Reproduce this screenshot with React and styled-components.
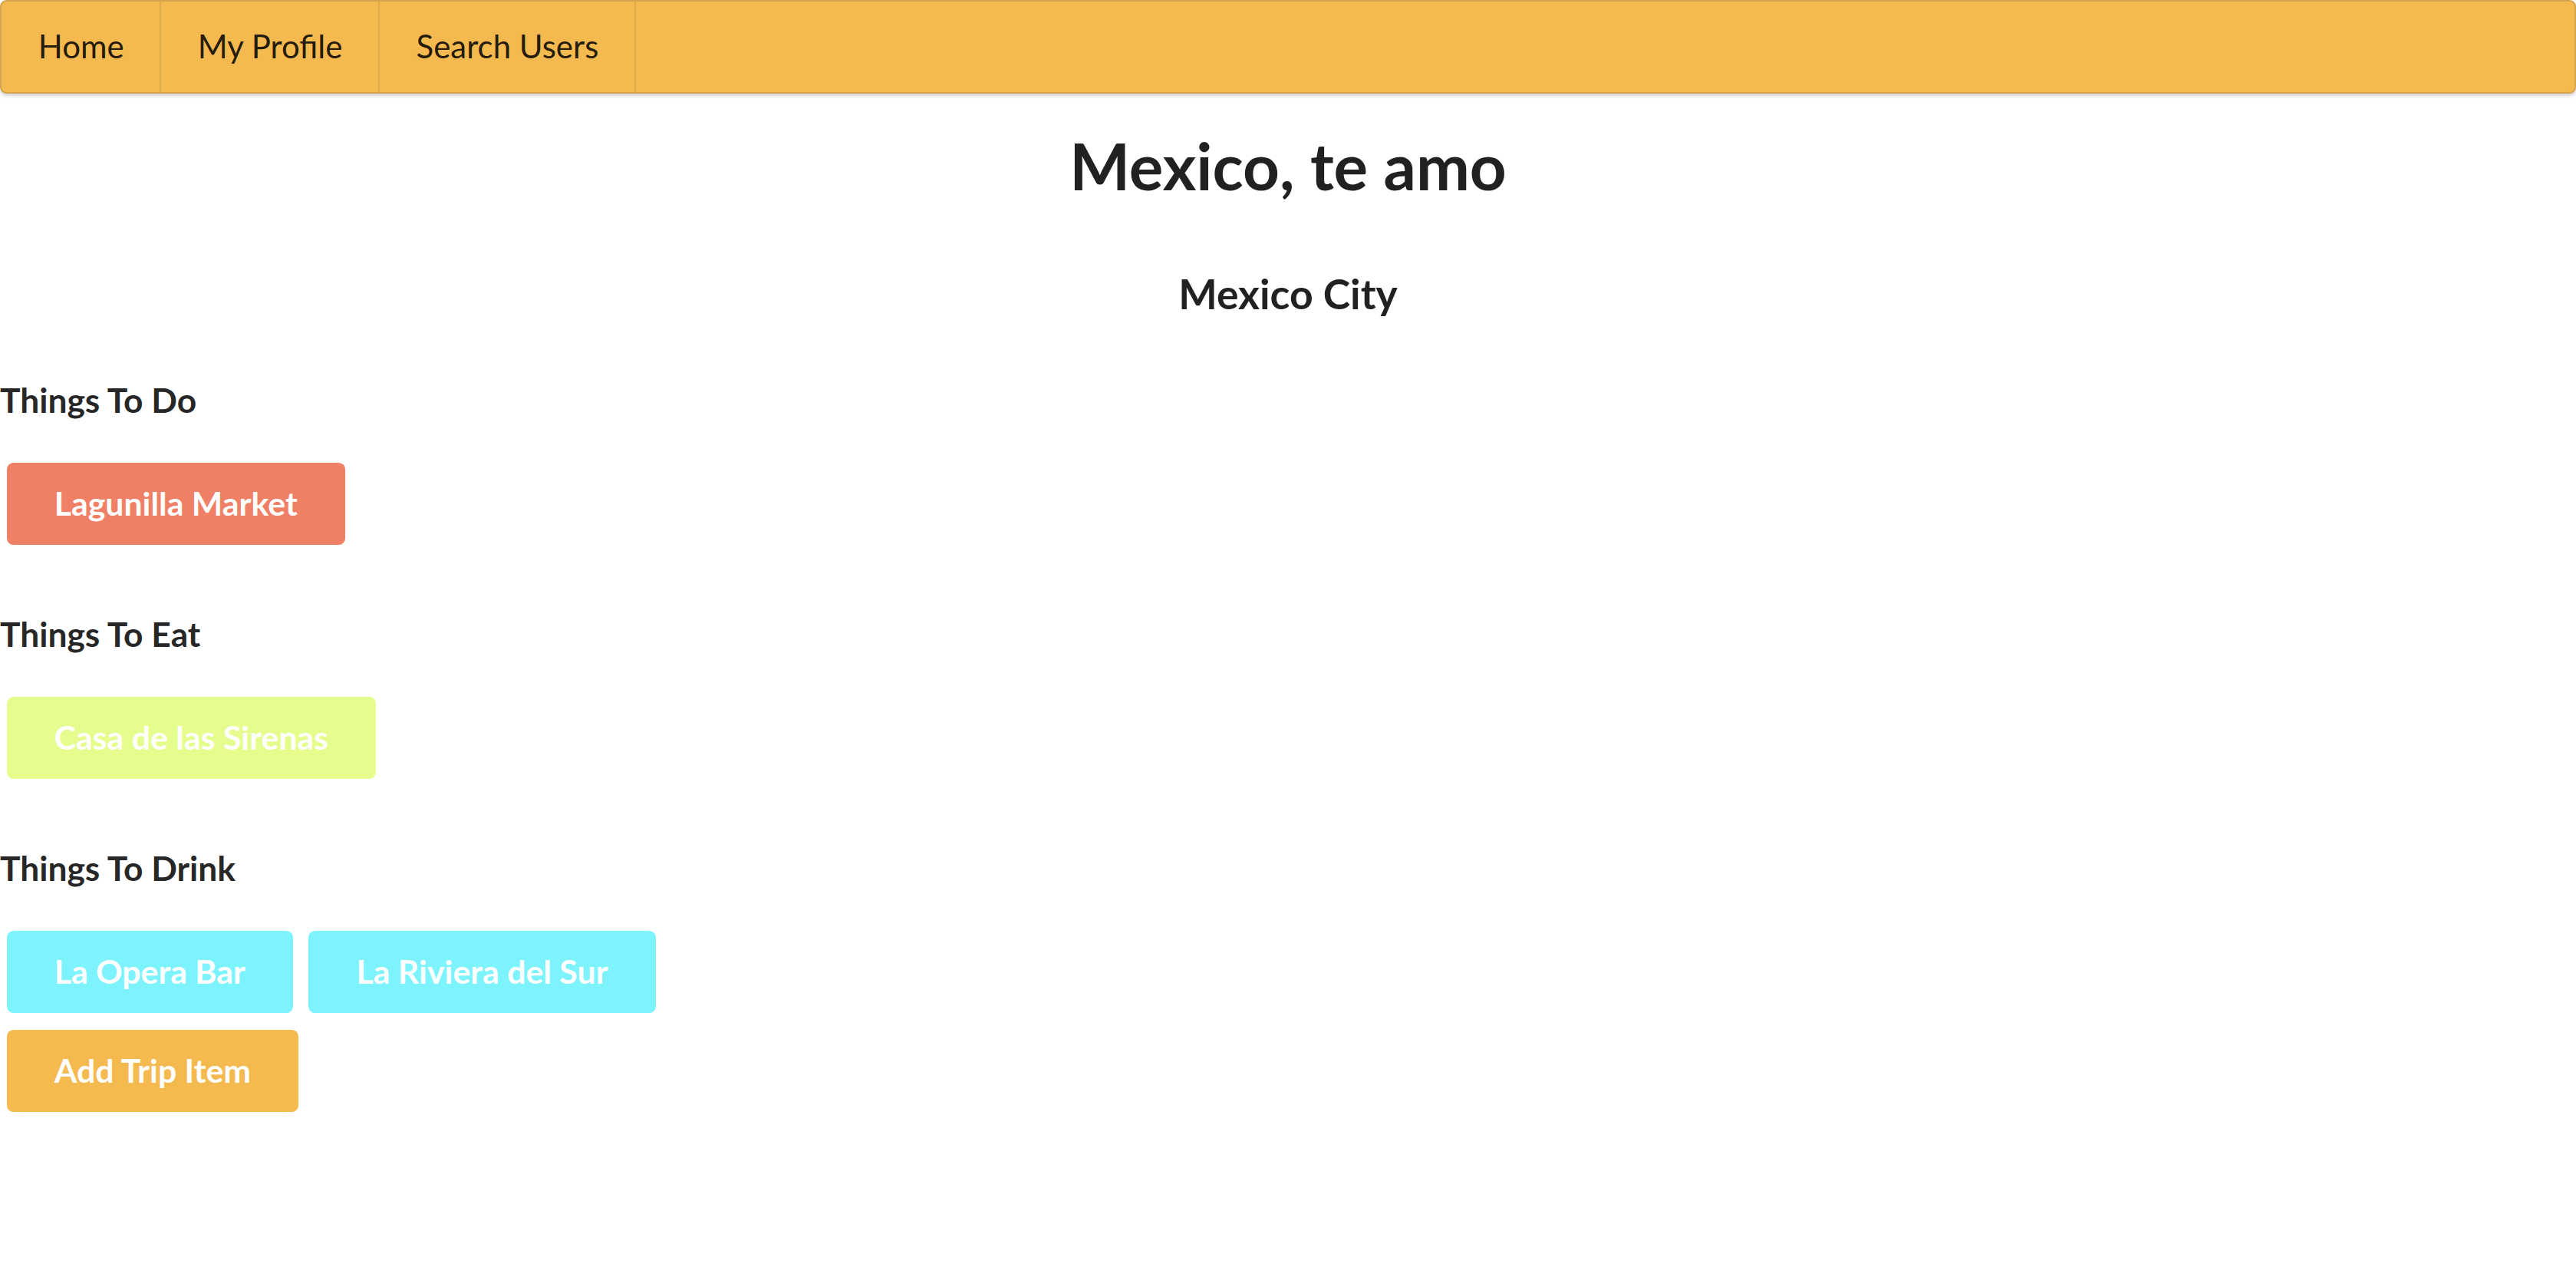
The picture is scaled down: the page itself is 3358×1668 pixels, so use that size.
import React from "react";
import styled, { createGlobalStyle } from "styled-components";

const GlobalStyle = createGlobalStyle`
  html {
    zoom: 2.14158;
  }
  body {
    margin: 0;
    background: #ffffff;
    font-family: Lato, "Helvetica Neue", Arial, sans-serif;
    color: rgba(0, 0, 0, 0.87);
  }
  * {
    box-sizing: border-box;
  }
`;

const Page = styled.div`
  display: flex;
  flex-direction: column;
`;

const Menu = styled.nav`
  display: flex;
  align-items: stretch;
  height: 57px;
  background: #f4b94f;
  border: 1px solid #d5a44d;
  border-radius: 4px;
  box-shadow: 0 1px 2px 0 rgba(34, 36, 38, 0.2);
`;

const MenuItem = styled.a`
  display: flex;
  align-items: center;
  padding: 0 21.7px 0 22.3px;
  font-size: 19.6px;
  line-height: 1;
  color: rgba(0, 0, 0, 0.87);
  text-decoration: none;
  border-right: 1px solid rgba(34, 36, 38, 0.1);
  cursor: pointer;
`;

const Title = styled.h1`
  margin: 20px 0 0;
  font-size: 39px;
  line-height: 48px;
  font-weight: 700;
  text-align: center;
  color: rgba(0, 0, 0, 0.87);
`;

const City = styled.h2`
  margin: 40px 0 0;
  font-size: 25px;
  line-height: 28px;
  font-weight: 700;
  text-align: center;
  color: rgba(0, 0, 0, 0.87);
`;

const Sections = styled.div`
  display: flex;
  flex-direction: column;
  gap: 42px;
  margin-top: 38px;
`;

const Section = styled.section`
  display: flex;
  flex-direction: column;
`;

const SectionTitle = styled.h3`
  margin: 0 0 26.5px;
  font-size: 20.7px;
  line-height: 24px;
  font-weight: 700;
  color: rgba(0, 0, 0, 0.87);
`;

const ButtonRow = styled.div`
  display: flex;
  flex-wrap: wrap;
  gap: 9.5px;
  padding-left: 4px;
`;

const ItemButton = styled.button`
  font-family: Lato, "Helvetica Neue", Arial, sans-serif;
  font-size: 20px;
  font-weight: 700;
  line-height: 20px;
  padding: 15px 29px;
  border: none;
  border-radius: 4px;
  color: #ffffff;
  background: ${(p) => p.$color};
  cursor: pointer;
`;

const ActionRow = styled.div`
  display: flex;
  padding-left: 4px;
  margin-top: 10px;
`;

const COLORS = {
  do: "#ef7f65",
  eat: "#e5fd8d",
  drink: "#7df4fd",
  add: "#f4b94f",
};

const sections = [
  { title: "Things To Do", kind: "do", items: ["Lagunilla Market"] },
  { title: "Things To Eat", kind: "eat", items: ["Casa de las Sirenas"] },
  { title: "Things To Drink", kind: "drink", items: ["La Opera Bar", "La Riviera del Sur"] },
];

export default function App() {
  return (
    <>
      <GlobalStyle />
      <Page>
        <Menu>
          <MenuItem>Home</MenuItem>
          <MenuItem>My Profile</MenuItem>
          <MenuItem>Search Users</MenuItem>
        </Menu>
        <Title>Mexico, te amo</Title>
        <City>Mexico City</City>
        <Sections>
          {sections.map((s) => (
            <Section key={s.title}>
              <SectionTitle>{s.title}</SectionTitle>
              <ButtonRow>
                {s.items.map((it) => (
                  <ItemButton key={it} $color={COLORS[s.kind]}>
                    {it}
                  </ItemButton>
                ))}
              </ButtonRow>
            </Section>
          ))}
        </Sections>
        <ActionRow>
          <ItemButton $color={COLORS.add}>Add Trip Item</ItemButton>
        </ActionRow>
      </Page>
    </>
  );
}
